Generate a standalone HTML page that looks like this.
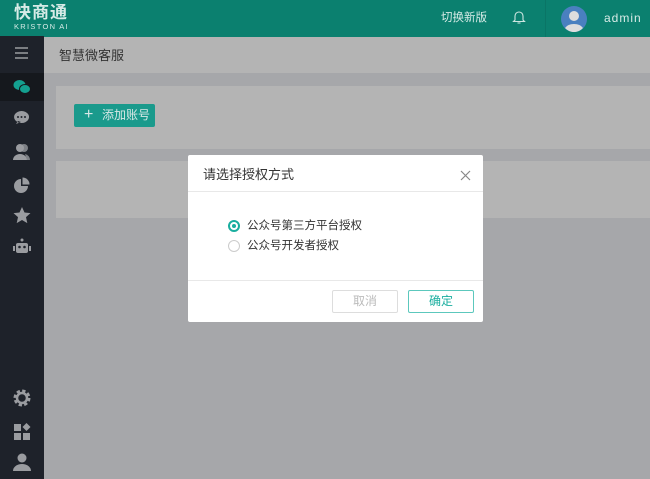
<!DOCTYPE html>
<html><head><meta charset="utf-8"><style>
*{margin:0;padding:0;box-sizing:border-box}
body{width:650px;height:479px;overflow:hidden;background:#a6a7aa;font-family:"Liberation Sans","Noto Sans CJK SC",sans-serif;position:relative}
.hd{position:absolute;left:0;top:0;width:650px;height:37px;background:#0b806f}
.sb{position:absolute;left:0;top:37px;width:44px;height:442px;background:#1e222a}
.ab{position:absolute;left:0;top:36px;width:44px;height:37px;background:#1e222a}
.act{position:absolute;left:0;top:73px;width:44px;height:28px;background:#15181d}
.ic{position:absolute;left:13px}
.bc{position:absolute;left:44px;top:37px;width:606px;height:36px;background:#b4b4b4;font-size:13px;color:#333;padding:10px 0 0 15px;line-height:18px}
.card{position:absolute;left:56px;width:594px;background:#b4b4b4}
.btn{position:absolute;left:74px;top:104px;width:81px;height:23px;background:#1a9a8c;border-radius:2px;color:#d8e8e6;font-size:12px;line-height:23px;padding-left:28px}
.dlg{position:absolute;left:188px;top:155px;width:295px;height:167px;background:#fff;border-radius:2px}
.t{position:absolute;left:15px;top:11px;font-size:13px;color:#333;line-height:18px}
.ln{position:absolute;left:0;width:295px;height:1px;background:#e8e8e8}
.r{position:absolute;left:42px;font-size:11.5px;color:#333;line-height:14px}
.rd{position:absolute;left:-2px;top:1px;width:12px;height:12px;border-radius:50%;border:1px solid #ccc}
.b2{position:absolute;top:135px;width:66px;height:23px;border:1px solid #ddd;border-radius:2px;font-size:12px;text-align:center;line-height:21px}
</style></head><body>
<div class="hd">
<div style="position:absolute;left:14px;top:3px;color:#d7ebe7;font-size:17px;line-height:19px;font-weight:bold;letter-spacing:1px">快商通</div>
<div style="position:absolute;left:14px;top:22px;color:#d7ebe7;font-size:7.5px;line-height:9px;letter-spacing:1.3px">KRISTON AI</div>
<div style="position:absolute;left:441px;top:10px;color:#d7ebe7;font-size:11.5px;line-height:16px">切换新版</div>
<svg style="position:absolute;left:512px;top:10px" width="14" height="15" viewBox="0 0 14 15"><path d="M3 10V6a4 4 0 0 1 8 0v4l1.5 1.5h-11z M5.5 13h3" fill="none" stroke="#cde6e1" stroke-width="1.1"/></svg>
<div style="position:absolute;left:545px;top:0;width:1px;height:37px;background:#0a7566"></div>
<svg style="position:absolute;left:561px;top:6px" width="26" height="26"><circle cx="13" cy="13" r="13" fill="#4a80c0"/><circle cx="13" cy="10" r="5" fill="#ddd"/><path d="M4 22a10 7 0 0 1 18 0a12 12 0 0 1-18 0z" fill="#ddd"/></svg>
<div style="position:absolute;left:604px;top:10px;color:#d7ebe7;font-size:12px;line-height:16px;letter-spacing:1px">admin</div>
</div>
<div class="sb"></div><div class="ab"></div><div class="act"></div>
<svg class="ic" style="top:46px" width="18" height="14"><path d="M2 2h13M2 7h13M2 12h13" stroke="#9a9ca0" stroke-width="1.5"/></svg>
<svg class="ic" style="top:79px" width="18" height="16"><ellipse cx="6.5" cy="6" rx="6" ry="5" fill="#14a090"/><ellipse cx="12" cy="10" rx="5.5" ry="4.5" fill="#14a090" stroke="#15181d"/></svg>
<svg class="ic" style="top:110px" width="18" height="16"><path d="M8.5 1a7.5 6 0 1 0 0.1 0zM3 14l2-3 3 1z" fill="#9a9ca0"/><circle cx="5" cy="7" r="1" fill="#1e222a"/><circle cx="8.5" cy="7" r="1" fill="#1e222a"/><circle cx="12" cy="7" r="1" fill="#1e222a"/></svg>
<svg class="ic" style="top:143px" width="18" height="18"><circle cx="11" cy="5" r="4" fill="#7d8085"/><circle cx="7" cy="5" r="4" fill="#9a9ca0"/><path d="M0 17a7 6 0 0 1 14 0z" fill="#9a9ca0"/><path d="M12 11a6 6 0 0 1 5 6h-3z" fill="#7d8085"/></svg>
<svg class="ic" style="top:176px" width="18" height="18"><path d="M8 3a7 7 0 1 0 7 7h-7z" fill="#9a9ca0"/><path d="M9.5 1.5a7 7 0 0 1 7 7h-7z" fill="#9a9ca0"/></svg>
<svg class="ic" style="top:207px" width="18" height="17"><path d="M9 0l2.5 5.5 6 .6-4.5 4 1.3 6-5.3-3.1-5.3 3.1 1.3-6-4.5-4 6-.6z" fill="#9a9ca0"/></svg>
<svg class="ic" style="top:238px" width="18" height="18"><circle cx="9" cy="2" r="1.5" fill="#9a9ca0"/><rect x="3" y="5" width="12" height="10" rx="2" fill="#9a9ca0"/><rect x="0" y="8" width="2" height="5" fill="#9a9ca0"/><rect x="16" y="8" width="2" height="5" fill="#9a9ca0"/><circle cx="6.5" cy="9" r="1.3" fill="#1e222a"/><circle cx="11.5" cy="9" r="1.3" fill="#1e222a"/></svg>
<svg class="ic" style="top:389px" width="18" height="18"><circle cx="9" cy="9" r="6.5" fill="none" stroke="#9a9ca0" stroke-width="4" stroke-dasharray="3 2.1"/><circle cx="9" cy="9" r="5" fill="none" stroke="#9a9ca0" stroke-width="2.5"/></svg>
<svg class="ic" style="top:423px" width="18" height="18"><rect x="1" y="1" width="7" height="7" fill="#9a9ca0"/><rect x="1" y="10" width="7" height="7" fill="#9a9ca0"/><rect x="10" y="10" width="7" height="7" fill="#9a9ca0"/><path d="M13.5 0l4 4-4 4-4-4z" fill="#9a9ca0"/></svg>
<svg class="ic" style="top:453px" width="18" height="18"><circle cx="9" cy="5" r="4.5" fill="#9a9ca0"/><path d="M0 18a9 7 0 0 1 18 0z" fill="#9a9ca0"/></svg>
<div class="bc">智慧微客服</div>
<div class="card" style="top:86px;height:63px"></div>
<div class="card" style="top:161px;height:57px"></div>
<div class="btn"><span style="position:absolute;left:10px;top:-1px;font-size:16px">+</span>添加账号</div>
<div class="dlg">
<div class="t">请选择授权方式</div>
<svg style="position:absolute;left:272px;top:15px" width="11" height="11"><path d="M1 1l9 9M10 1l-9 9" stroke="#888" stroke-width="1.2"/></svg>
<div class="ln" style="top:36px"></div>
<div class="r" style="top:64px"><span class="rd" style="border:2px solid #1aae9f"><span style="position:absolute;left:2px;top:2px;width:4px;height:4px;border-radius:50%;background:#1aae9f"></span></span><span style="margin-left:17px">公众号第三方平台授权</span></div>
<div class="r" style="top:84px"><span class="rd"></span><span style="margin-left:17px">公众号开发者授权</span></div>
<div class="ln" style="top:125px"></div>
<div class="b2" style="left:144px;color:#bbb">取消</div>
<div class="b2" style="left:220px;color:#1aae9f;border-color:#5cc8bd">确定</div>
</div>
</body></html>
